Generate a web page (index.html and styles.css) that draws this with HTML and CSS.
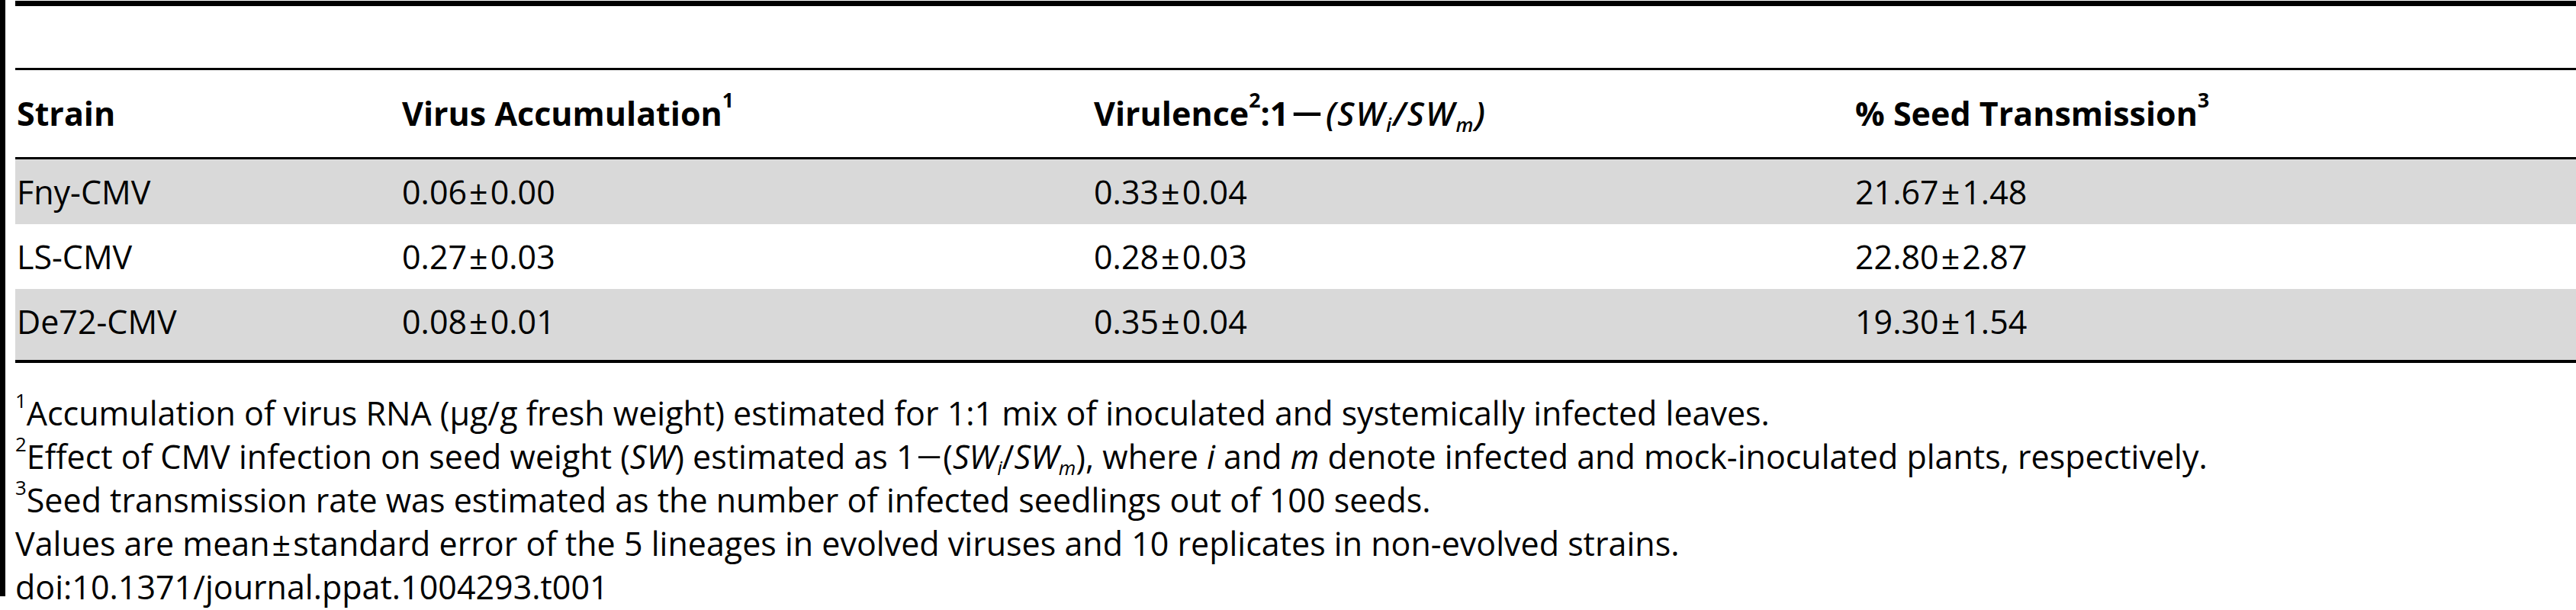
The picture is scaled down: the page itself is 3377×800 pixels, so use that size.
FILE: index.html
```html
<!DOCTYPE html>
<html lang="en">
<head>
<meta charset="utf-8">
<title>Table 1</title>
<link rel="stylesheet" href="styles.css">
</head>
<body>
<div class="page">
  <div class="edge"></div>
  <div class="sheet">
    <div class="caption"></div>
    <div class="grid thead">
      <div class="cell">Strain</div>
      <div class="cell">Virus Accumulation<sup class="sup">1</sup></div>
      <div class="cell">Virulence<sup class="sup">2</sup>:1<span class="op head-op">−</span><span class="it">(SW<sub class="sub">i</sub>/SW<sub class="sub">m</sub>)</span></div>
      <div class="cell">% Seed Transmission<sup class="sup">3</sup></div>
    </div>
    <div class="grid row alt">
      <div class="cell">Fny-CMV</div>
      <div class="cell">0.06<span class="pm">±</span>0.00</div>
      <div class="cell">0.33<span class="pm">±</span>0.04</div>
      <div class="cell">21.67<span class="pm">±</span>1.48</div>
    </div>
    <div class="grid row">
      <div class="cell">LS-CMV</div>
      <div class="cell">0.27<span class="pm">±</span>0.03</div>
      <div class="cell">0.28<span class="pm">±</span>0.03</div>
      <div class="cell">22.80<span class="pm">±</span>2.87</div>
    </div>
    <div class="grid row alt last">
      <div class="cell">De72-CMV</div>
      <div class="cell">0.08<span class="pm">±</span>0.01</div>
      <div class="cell">0.35<span class="pm">±</span>0.04</div>
      <div class="cell">19.30<span class="pm">±</span>1.54</div>
    </div>
    <div class="notes">
      <p class="note"><sup class="sup">1</sup>Accumulation of virus RNA (μg/g fresh weight) estimated for 1:1 mix of inoculated and systemically infected leaves.</p>
      <p class="note"><sup class="sup">2</sup>Effect of CMV infection on seed weight (<i>SW</i>) estimated as 1<span class="op">−</span>(<i>SW<sub class="sub">i</sub></i>/<i>SW<sub class="sub">m</sub></i>), where <i>i</i> and <i>m</i> denote infected and mock-inoculated plants, respectively.</p>
      <p class="note"><sup class="sup">3</sup>Seed transmission rate was estimated as the number of infected seedlings out of 100 seeds.</p>
      <p class="note">Values are mean<span class="pm">±</span>standard error of the 5 lineages in evolved viruses and 10 replicates in non-evolved strains.</p>
      <p class="note">doi:10.1371/journal.ppat.1004293.t001</p>
    </div>
  </div>
</div>
</body>
</html>
```

FILE: styles.css
```css
html, body {
  margin: 0;
  padding: 0;
  background: #ffffff;
}

body {
  width: 3377px;
  height: 800px;
  overflow: hidden;
  font-family: "Open Sans", "Noto Sans", sans-serif;
  font-size: 43px;
  color: #000000;
}

.page {
  display: flex;
  align-items: flex-start;
  height: 800px;
}

.edge {
  flex: none;
  width: 7px;
  height: 782px;
  background: #000000;
}

.sheet {
  flex: 1;
  min-width: 0;
  margin-left: 13px;
  padding-top: 1px;
}

.caption {
  height: 81px;
  border-top: 7px solid #000000;
  border-bottom: 3px solid #000000;
}

.grid {
  display: grid;
  grid-template-columns: 505px 907px 998px 1fr;
}

.thead {
  height: 114px;
  line-height: 114px;
  font-weight: 700;
  border-bottom: 3px solid #000000;
}

.row {
  height: 85px;
  line-height: 85px;
}

.alt {
  background: #d9d9d9;
}

.last {
  padding-bottom: 8px;
  border-bottom: 4px solid #000000;
}

.cell {
  padding-left: 2px;
  white-space: nowrap;
}

.it {
  font-style: italic;
  font-weight: 600;
  letter-spacing: 2px;
}

.op {
  display: inline-block;
  margin: 0 6px;
  transform: scaleX(1.4);
}

.head-op {
  margin: 0 12px;
  transform: scaleX(1.7);
}

.pm {
  margin: 0 3px;
}

.sup {
  font-size: 0.6em;
  line-height: 0;
  vertical-align: 0.9em;
}

.thead .sup {
  font-size: 0.62em;
}

.sub {
  font-size: 0.6em;
  line-height: 0;
  vertical-align: -0.3em;
}

.notes {
  margin-top: 37px;
}

.note {
  margin: 0;
  line-height: 57px;
  white-space: nowrap;
}
```
